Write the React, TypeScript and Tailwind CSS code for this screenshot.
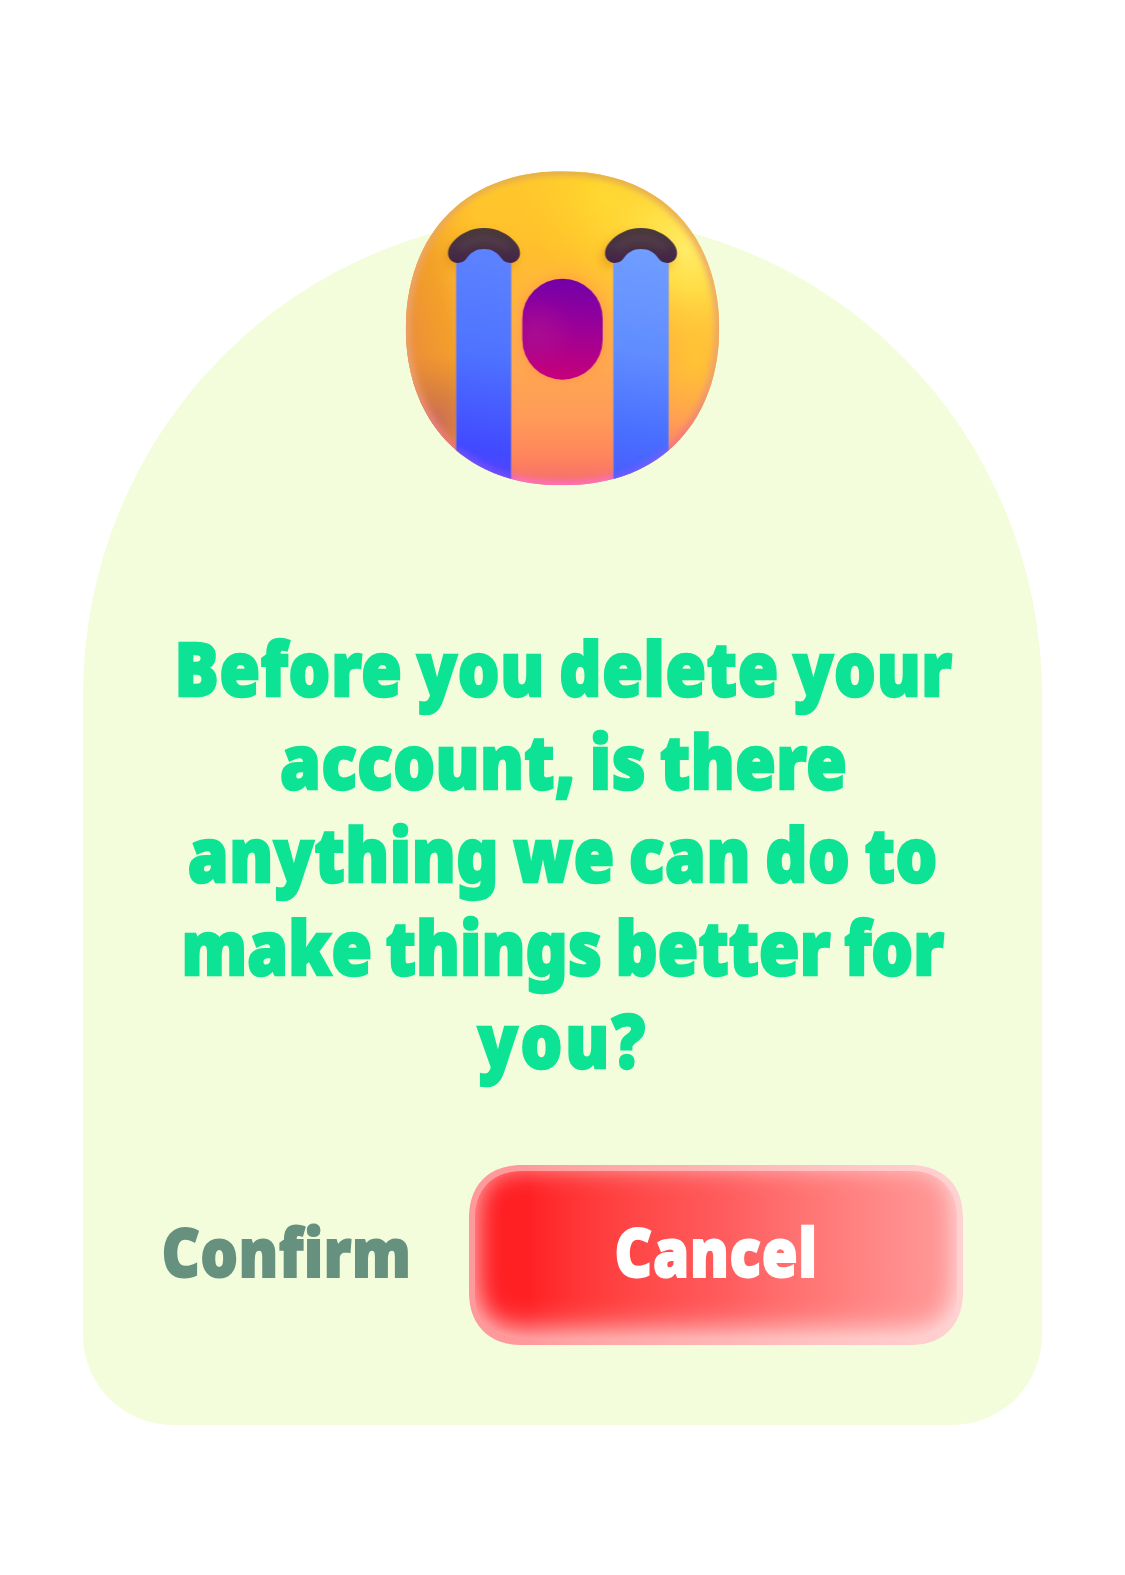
const FACE =
  "M502.5 976C816 976 972.5 765 972.5 505C972.5 245 816 34 502.5 34C189 34 32.5 245 32.5 505C32.5 765 189 976 502.5 976Z";
const BROW =
  "M159 280C159 268 163 259 171 249C193 222 228 204 267 204C306 204 341 222 363 249C371 259 375 268 375 280C375 297 362 309 346 309C334 309 325 304 319 295C307 277 290 267 267 267C244 267 227 277 215 295C209 304 200 309 188 309C172 309 159 297 159 280Z";

function CryingFace() {
  return (
    <svg viewBox="-6 0 1020 1020" className="-mt-[54.5px] h-[340px] w-[340px] shrink-0" aria-hidden="true">
      <defs>
        <linearGradient id="skin" x1="0" y1="0" x2="0" y2="1">
          <stop offset="0" stopColor="#ffca2b" />
          <stop offset="0.25" stopColor="#ffc02c" />
          <stop offset="0.42" stopColor="#ffb43f" />
          <stop offset="0.6" stopColor="#ffa850" />
          <stop offset="0.76" stopColor="#ff9b58" />
          <stop offset="0.87" stopColor="#ff855c" />
          <stop offset="0.95" stopColor="#f46f6c" />
        </linearGradient>
        <radialGradient id="glow" gradientUnits="userSpaceOnUse" cx="0" cy="0" r="1" gradientTransform="translate(870 270) rotate(42) scale(400 300)">
          <stop offset="0" stopColor="#ffec68" />
          <stop offset="0.35" stopColor="#ffe348" stopOpacity="0.85" />
          <stop offset="1" stopColor="#ffcf2c" stopOpacity="0" />
        </radialGradient>
        <radialGradient id="crown" gradientUnits="userSpaceOnUse" cx="630" cy="110" r="260">
          <stop offset="0" stopColor="#ffdc2e" stopOpacity="0.9" />
          <stop offset="1" stopColor="#ffcf2c" stopOpacity="0" />
        </radialGradient>
        <radialGradient id="warm" gradientUnits="userSpaceOnUse" cx="900" cy="600" r="220">
          <stop offset="0" stopColor="#ffc335" />
          <stop offset="1" stopColor="#ffbb2e" stopOpacity="0" />
        </radialGradient>
        <linearGradient id="shade" gradientUnits="userSpaceOnUse" x1="32" y1="560" x2="330" y2="480">
          <stop offset="0" stopColor="#ec8d3a" />
          <stop offset="0.45" stopColor="#f09c26" stopOpacity="0.85" />
          <stop offset="1" stopColor="#fbb02a" stopOpacity="0" />
        </linearGradient>
        <radialGradient id="shadeLow" gradientUnits="userSpaceOnUse" cx="110" cy="790" r="210">
          <stop offset="0" stopColor="#c96a5c" />
          <stop offset="0.5" stopColor="#cf7744" stopOpacity="0.6" />
          <stop offset="1" stopColor="#d98233" stopOpacity="0" />
        </radialGradient>
        <linearGradient id="rim" x1="0" y1="0" x2="0" y2="1">
          <stop offset="0" stopColor="#e0ac50" />
          <stop offset="0.3" stopColor="#eda66c" />
          <stop offset="0.65" stopColor="#eaa070" />
          <stop offset="0.86" stopColor="#ef7880" />
          <stop offset="0.98" stopColor="#ff6fc4" />
        </linearGradient>
        <linearGradient id="tearLeft" gradientUnits="userSpaceOnUse" x1="310" y1="280" x2="210" y2="940">
          <stop offset="0" stopColor="#5d83ff" />
          <stop offset="0.45" stopColor="#4f73ff" />
          <stop offset="0.88" stopColor="#414aff" />
          <stop offset="1" stopColor="#5544ff" />
        </linearGradient>
        <linearGradient id="tearRight" gradientUnits="userSpaceOnUse" x1="790" y1="280" x2="690" y2="940">
          <stop offset="0" stopColor="#709dff" />
          <stop offset="0.45" stopColor="#608dff" />
          <stop offset="0.8" stopColor="#4a70ff" />
          <stop offset="1" stopColor="#4860ff" />
        </linearGradient>
        <linearGradient id="mouth" gradientUnits="userSpaceOnUse" x1="520" y1="370" x2="490" y2="645">
          <stop offset="0" stopColor="#7600a8" />
          <stop offset="0.45" stopColor="#9a0098" />
          <stop offset="1" stopColor="#c4007c" />
        </linearGradient>
        <radialGradient id="tongue" gradientUnits="userSpaceOnUse" cx="430" cy="520" r="110">
          <stop offset="0" stopColor="#ac1492" stopOpacity="0.6" />
          <stop offset="1" stopColor="#ac1492" stopOpacity="0" />
        </radialGradient>
        <linearGradient id="brow" x1="0" y1="0" x2="0" y2="1">
          <stop offset="0" stopColor="#4a3a3a" />
          <stop offset="0.5" stopColor="#493344" />
          <stop offset="1" stopColor="#432348" />
        </linearGradient>
        <filter id="soft" x="-30%" y="-30%" width="160%" height="160%">
          <feGaussianBlur stdDeviation="9" />
        </filter>
        <filter id="softer" x="-30%" y="-30%" width="160%" height="160%">
          <feGaussianBlur stdDeviation="14" />
        </filter>
        <clipPath id="face">
          <path d={FACE} />
        </clipPath>
        <clipPath id="browClip">
          <path d={BROW} />
        </clipPath>
      </defs>

      <g clipPath="url(#face)">
        <rect width="1020" height="1020" fill="url(#skin)" />
        <rect width="1020" height="1020" fill="url(#crown)" />
        <rect width="1020" height="1020" fill="url(#warm)" />
        <rect width="1020" height="1020" fill="url(#glow)" />
        <rect width="349" height="1020" fill="url(#shade)" />
        <rect width="349" height="1020" fill="url(#shadeLow)" />
        <path d={FACE} fill="none" stroke="url(#rim)" strokeWidth="24" filter="url(#soft)" />
        <g fill="#d98a14" opacity="0.55" filter="url(#softer)">
          <path d={BROW} transform="translate(-8 14)" />
          <path d={BROW} transform="translate(459 14)" />
        </g>
        <rect x="378" y="352" width="248" height="311" rx="124" fill="#ff8a50" opacity="0.5" filter="url(#softer)" />
        <path d="M183 1020V290C215 235 317 235 349 290V1020Z" fill="url(#tearLeft)" />
        <path d="M655 1020V290C687 235 789 235 821 290V1020Z" fill="url(#tearRight)" />
        <path d="M183 309V1020M349 309V1020M655 309V1020M821 309V1020" stroke="#b09bb0" strokeWidth="2" opacity="0.7" />
        <g fill="none" stroke="#8f5cff" strokeWidth="14" opacity="0.75" filter="url(#soft)">
          <path d="M183 868Q260 930 349 955" />
          <path d="M655 955Q745 932 821 868" />
        </g>
      </g>

      <rect x="382" y="356" width="241" height="303" rx="120" fill="url(#mouth)" />
      <rect x="382" y="356" width="241" height="303" rx="120" fill="url(#tongue)" />

      {[0, 471].map((x) => (
        <g key={x} transform={`translate(${x} 0)`}>
          <path d={BROW} fill="url(#brow)" />
          <g clipPath="url(#browClip)">
            <path d="M195 268Q225 232 268 234Q310 236 338 268" fill="none" stroke="#5c4452" strokeWidth="16" opacity="0.6" filter="url(#soft)" />
          </g>
        </g>
      ))}
    </svg>
  );
}

export default function App() {
  return (
    <main className="flex h-[1575px] w-[1125px] justify-center bg-white pt-[214.5px] font-['Noto_Sans',sans-serif] font-black [stroke-linejoin:round]">
      <section className="flex h-[1210px] w-[959px] flex-col items-center rounded-t-[480px] rounded-b-[90px] bg-[#f3fddb]">
        <CryingFace />
        <h1 className="mt-[121px] scale-x-[0.875] text-center text-[75px] leading-[93px] whitespace-nowrap text-[#0de394] [-webkit-text-stroke:2.5px_#0de394] [word-spacing:-4px]">
          <span className="block pl-0.5 tracking-[0.85px]">Before you delete your</span>
          <span className="block pl-0.5 tracking-[0.55px]">account, is there</span>
          <span className="block tracking-[0.7px]">anything we can do to</span>
          <span className="block tracking-[0.1px]">make things better for</span>
          <span className="block tracking-[3.2px]">you?</span>
        </h1>
        <div className="mt-[79px] flex h-[180px] w-[800px] gap-[60px] text-[67.5px] leading-none">
          <button className="flex w-[246px] items-center justify-center pb-1.5 pl-0.5 text-[#67917f] [-webkit-text-stroke:2px_#67917f]">
            <span className="scale-x-[0.87] tracking-[0.9px]">Confirm</span>
          </button>
          <button className="flex w-[494px] items-center justify-center rounded-[48px] border-6 border-white/55 bg-linear-to-r from-[#ff2024] from-12% via-[#ff5c5e] via-52% to-[#ff9d9d] bg-origin-border pb-1.5 pl-0.5 text-white shadow-[inset_0_-14px_30px_-4px_rgba(255,255,255,0.6),inset_0_0_24px_rgba(255,255,255,0.4)] [-webkit-text-stroke:2px_white] supports-[corner-shape:squircle]:rounded-[54px] supports-[corner-shape:squircle]:[corner-shape:superellipse(1.2)]">
            <span className="scale-x-[0.86] tracking-[0.9px]">Cancel</span>
          </button>
        </div>
      </section>
    </main>
  );
}
